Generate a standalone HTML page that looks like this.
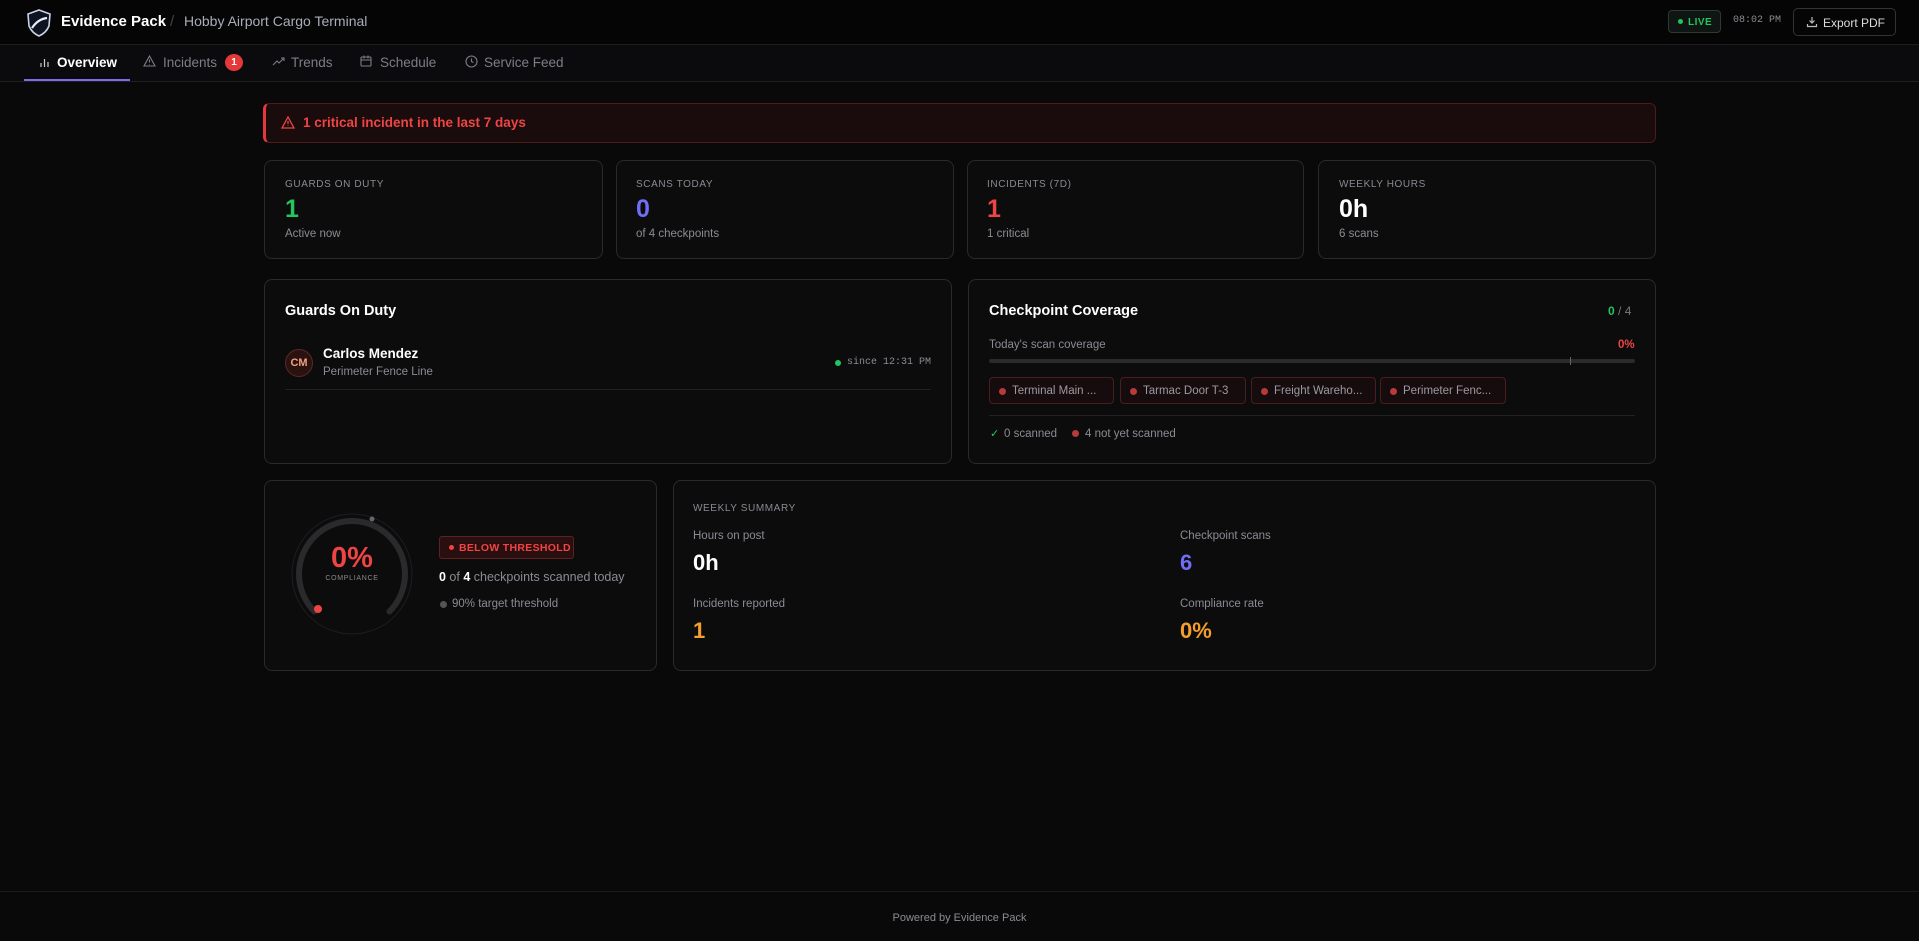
<!DOCTYPE html>
<html><head><meta charset="utf-8"><style>
*{box-sizing:border-box;margin:0;padding:0}
body{width:1919px;height:941px;background:#09090a;font-family:"Liberation Sans",sans-serif;color:#e5e5e5;position:relative;overflow:hidden}
.abs{position:absolute}
.card{position:absolute;background:#0c0c0d;border:1px solid #2a2a2d;border-radius:8px}
.lbl{font-size:10px;letter-spacing:.6px;color:#8a8a92;text-transform:uppercase}
.mono{font-family:"Liberation Mono",monospace}
.muted{color:#8b8b93}
</style></head><body>
<!-- header -->
<div class="abs" style="left:0;top:0;width:1919px;height:45px;background:#050505;border-bottom:1px solid #1e1e21"></div>
<svg class="abs" style="left:26px;top:9px" width="26" height="28" viewBox="0 0 26 28"><path d="M13 1 L24 5 L23 17 Q20 24 13 27 Q6 24 3 17 L2 5 Z" fill="#0d1320" stroke="#c9d3e6" stroke-width="1.6"/><path d="M6 19 Q12 10 21 9" fill="none" stroke="#e8eef8" stroke-width="2.2"/></svg>
<div class="abs" style="left:61px;top:13px;font-size:15px;font-weight:bold;color:#fff">Evidence Pack</div>
<div class="abs" style="left:170px;top:13px;font-size:15px;color:#444">/</div>
<div class="abs" style="left:184px;top:13px;font-size:14px;color:#a8adb8">Hobby Airport Cargo Terminal</div>
<div class="abs" style="left:1668px;top:10px;width:53px;height:23px;border:1px solid #2e3a30;background:#0f1512;border-radius:4px;font-size:10px;font-weight:bold;color:#22c55e;padding:6px 0 0 9px;letter-spacing:.5px"><span style="display:inline-block;width:5px;height:5px;border-radius:50%;background:#22c55e;margin-right:5px;vertical-align:1px"></span>LIVE</div>
<div class="abs mono" style="left:1733px;top:15px;font-size:10px;color:#8a8a92">08:02 PM</div>
<div class="abs" style="left:1793px;top:8px;width:103px;height:28px;border:1px solid #333;border-radius:5px;font-size:12px;color:#ddd;padding:7px 0 0 29px;background:#050505">Export PDF</div>
<svg class="abs" style="left:1806px;top:16px" width="12" height="12" viewBox="0 0 12 12" fill="none" stroke="#bbb" stroke-width="1.2"><path d="M6 1v6M3.5 4.5L6 7l2.5-2.5M1.5 8v2.5h9V8"/></svg>
<!-- nav -->
<div class="abs" style="left:0;top:45px;width:1919px;height:37px;background:#0b0b0d;border-bottom:1px solid #1f1f22"></div>
<svg class="abs" style="left:39px;top:57px" width="11" height="10" viewBox="0 0 11 10" stroke="#ccc" stroke-width="1.2"><path d="M2 10V6M5.5 10V2M9 10V5"/></svg>
<div class="abs" style="left:57px;top:55px;font-size:13.5px;font-weight:bold;color:#fff">Overview</div>
<div class="abs" style="left:24px;top:79px;width:106px;height:2px;background:#7c6cf0"></div>
<svg class="abs" style="left:143px;top:55px" width="13" height="12" viewBox="0 0 13 12" fill="none" stroke="#7d7d86" stroke-width="1.1"><path d="M6.5 1L12 11H1Z M6.5 4.5v3 M6.5 9v.5"/></svg>
<div class="abs" style="left:163px;top:55px;font-size:13.5px;color:#7d7d86">Incidents</div>
<div class="abs" style="left:225px;top:54px;width:18px;height:17px;border-radius:50%;background:#e5383b;color:#fff;font-size:10px;font-weight:bold;text-align:center;line-height:17px">1</div>
<svg class="abs" style="left:272px;top:57px" width="13" height="9" viewBox="0 0 13 9" fill="none" stroke="#7d7d86" stroke-width="1.1"><path d="M1 8L5 4l2 2 5-5M9 1h3v3"/></svg>
<div class="abs" style="left:291px;top:55px;font-size:13.5px;color:#7d7d86">Trends</div>
<svg class="abs" style="left:360px;top:55px" width="12" height="12" viewBox="0 0 12 12" fill="none" stroke="#7d7d86" stroke-width="1.1"><rect x="1" y="2" width="10" height="9" rx="1"/><path d="M1 5h10M4 0.5v3M8 .5v3"/></svg>
<div class="abs" style="left:380px;top:55px;font-size:13.5px;color:#7d7d86">Schedule</div>
<svg class="abs" style="left:465px;top:55px" width="13" height="13" viewBox="0 0 13 13" fill="none" stroke="#7d7d86" stroke-width="1.1"><circle cx="6.5" cy="6.5" r="5.5"/><path d="M6.5 3.5v3l2 1"/></svg>
<div class="abs" style="left:484px;top:55px;font-size:13.5px;color:#7d7d86">Service Feed</div>
<!-- alert -->
<div class="abs" style="left:263px;top:103px;width:1393px;height:40px;background:#1a0b0c;border:1px solid #4a1c1e;border-left:3px solid #e5383b;border-radius:6px"></div>
<svg class="abs" style="left:281px;top:116px" width="14" height="13" viewBox="0 0 14 13" fill="none" stroke="#ef4444" stroke-width="1.3"><path d="M7 1l6 11H1Z M7 5v3 M7 9.5v.5"/></svg>
<div class="abs" style="left:303px;top:115px;font-size:13.5px;font-weight:bold;color:#ef4444">1 critical incident in the last 7 days</div>
<!-- stat cards -->
<div class="card" style="left:264px;top:160px;width:339px;height:99px"></div>
<div class="card" style="left:616px;top:160px;width:338px;height:99px"></div>
<div class="card" style="left:967px;top:160px;width:337px;height:99px"></div>
<div class="card" style="left:1318px;top:160px;width:338px;height:99px"></div>
<div class="abs lbl" style="left:285px;top:179px">Guards on duty</div>
<div class="abs" style="left:285px;top:195px;font-size:25px;font-weight:bold;color:#22c55e">1</div>
<div class="abs muted" style="left:285px;top:228px;font-size:11.5px">Active now</div>
<div class="abs lbl" style="left:636px;top:179px">Scans today</div>
<div class="abs" style="left:636px;top:195px;font-size:25px;font-weight:bold;color:#6f6ef5">0</div>
<div class="abs muted" style="left:636px;top:228px;font-size:11.5px">of 4 checkpoints</div>
<div class="abs lbl" style="left:987px;top:179px">Incidents (7d)</div>
<div class="abs" style="left:987px;top:195px;font-size:25px;font-weight:bold;color:#ef4444">1</div>
<div class="abs muted" style="left:987px;top:228px;font-size:11.5px">1 critical</div>
<div class="abs lbl" style="left:1339px;top:179px">Weekly hours</div>
<div class="abs" style="left:1339px;top:195px;font-size:25px;font-weight:bold;color:#fff">0h</div>
<div class="abs muted" style="left:1339px;top:228px;font-size:11.5px">6 scans</div>
<!-- guards panel -->
<div class="card" style="left:264px;top:279px;width:688px;height:185px"></div>
<div class="abs" style="left:285px;top:303px;font-size:14.5px;font-weight:bold;color:#fff">Guards On Duty</div>
<div class="abs" style="left:285px;top:349px;width:28px;height:28px;border-radius:50%;background:#2a1210;border:1px solid #5a2a22;color:#f0a080;font-size:11px;font-weight:bold;text-align:center;line-height:26px">CM</div>
<div class="abs" style="left:323px;top:346px;font-size:13.5px;font-weight:bold;color:#fff">Carlos Mendez</div>
<div class="abs muted" style="left:323px;top:366px;font-size:11.5px">Perimeter Fence Line</div>
<div class="abs" style="left:835px;top:360px;width:6px;height:6px;border-radius:50%;background:#22c55e"></div>
<div class="abs mono muted" style="left:847px;top:357px;font-size:10px">since 12:31 PM</div>
<div class="abs" style="left:285px;top:389px;width:646px;height:1px;background:#222225"></div>
<!-- checkpoint panel -->
<div class="card" style="left:968px;top:279px;width:688px;height:185px"></div>
<div class="abs" style="left:989px;top:303px;font-size:14.5px;font-weight:bold;color:#fff">Checkpoint Coverage</div>
<div class="abs" style="left:1608px;top:304px;font-size:12px;color:#777"><b style="color:#22c55e">0</b> / 4</div>
<div class="abs muted" style="left:989px;top:339px;font-size:11.5px">Today's scan coverage</div>
<div class="abs" style="left:1618px;top:339px;font-size:11.5px;font-weight:bold;color:#ef4444">0%</div>
<div class="abs" style="left:989px;top:359px;width:646px;height:4px;border-radius:2px;background:#2b2b2e"></div>
<div class="abs" style="left:1570px;top:357px;width:1px;height:8px;background:#666"></div>
<div class="abs" style="left:989px;top:377px;width:125px;height:27px;border:1px solid #4a1e20;background:#170c0d;border-radius:4px;font-size:11.5px;color:#9a9aa2;padding:7px 0 0 22px">Terminal Main ...</div>
<div class="abs" style="left:1120px;top:377px;width:126px;height:27px;border:1px solid #4a1e20;background:#170c0d;border-radius:4px;font-size:11.5px;color:#9a9aa2;padding:7px 0 0 22px">Tarmac Door T-3</div>
<div class="abs" style="left:1251px;top:377px;width:125px;height:27px;border:1px solid #4a1e20;background:#170c0d;border-radius:4px;font-size:11.5px;color:#9a9aa2;padding:7px 0 0 22px">Freight Wareho...</div>
<div class="abs" style="left:1380px;top:377px;width:126px;height:27px;border:1px solid #4a1e20;background:#170c0d;border-radius:4px;font-size:11.5px;color:#9a9aa2;padding:7px 0 0 22px">Perimeter Fenc...</div>
<div class="abs" style="left:999px;top:388px;width:7px;height:7px;border-radius:50%;background:#b83a3a"></div>
<div class="abs" style="left:1130px;top:388px;width:7px;height:7px;border-radius:50%;background:#b83a3a"></div>
<div class="abs" style="left:1261px;top:388px;width:7px;height:7px;border-radius:50%;background:#b83a3a"></div>
<div class="abs" style="left:1390px;top:388px;width:7px;height:7px;border-radius:50%;background:#b83a3a"></div>
<div class="abs" style="left:989px;top:415px;width:646px;height:1px;background:#222225"></div>
<div class="abs" style="left:990px;top:427px;font-size:11px;color:#22c55e">✓</div>
<div class="abs muted" style="left:1004px;top:428px;font-size:11.5px">0 scanned</div>
<div class="abs" style="left:1072px;top:430px;width:7px;height:7px;border-radius:50%;background:#b83a3a"></div>
<div class="abs muted" style="left:1085px;top:428px;font-size:11.5px">4 not yet scanned</div>
<!-- compliance -->
<div class="card" style="left:264px;top:480px;width:393px;height:191px"></div>
<svg class="abs" style="left:290px;top:512px" width="124" height="124" viewBox="0 0 124 124">
<circle cx="62" cy="62" r="60" fill="none" stroke="#1e1e22" stroke-width="1"/>
<path d="M24.5 99.5 A53 53 0 1 1 99.5 99.5" fill="none" stroke="#2a2a2d" stroke-width="6" stroke-linecap="round"/>
<circle cx="28" cy="97" r="4" fill="#ef4444"/>
<circle cx="82" cy="7" r="2.5" fill="#666"/>
</svg>
<div class="abs" style="left:312px;top:542px;width:80px;text-align:center;font-size:29px;font-weight:bold;color:#ef4444">0%</div>
<div class="abs" style="left:312px;top:575px;width:80px;text-align:center;font-size:7px;letter-spacing:.7px;color:#8a8a92">COMPLIANCE</div>
<div class="abs" style="left:439px;top:536px;width:135px;height:23px;border:1px solid #5a2222;background:#2a0f10;border-radius:3px;font-size:10.5px;font-weight:bold;color:#ef4444;padding:5px 0 0 9px;letter-spacing:.3px"><span style="display:inline-block;width:5px;height:5px;border-radius:50%;background:#ef4444;margin-right:5px;vertical-align:1px"></span>BELOW THRESHOLD</div>
<div class="abs muted" style="left:439px;top:570px;font-size:12.5px"><b style="color:#fff">0</b> of <b style="color:#fff">4</b> checkpoints scanned today</div>
<div class="abs" style="left:440px;top:601px;width:7px;height:7px;border-radius:50%;background:#555"></div>
<div class="abs muted" style="left:452px;top:598px;font-size:11.5px">90% target threshold</div>
<!-- weekly -->
<div class="card" style="left:673px;top:480px;width:983px;height:191px"></div>
<div class="abs lbl" style="left:693px;top:503px">Weekly summary</div>
<div class="abs muted" style="left:693px;top:530px;font-size:11.5px">Hours on post</div>
<div class="abs" style="left:693px;top:550px;font-size:22px;font-weight:bold;color:#fff">0h</div>
<div class="abs muted" style="left:693px;top:598px;font-size:11.5px">Incidents reported</div>
<div class="abs" style="left:693px;top:618px;font-size:22px;font-weight:bold;color:#f59e2b">1</div>
<div class="abs muted" style="left:1180px;top:530px;font-size:11.5px">Checkpoint scans</div>
<div class="abs" style="left:1180px;top:550px;font-size:22px;font-weight:bold;color:#6f6ef5">6</div>
<div class="abs muted" style="left:1180px;top:598px;font-size:11.5px">Compliance rate</div>
<div class="abs" style="left:1180px;top:618px;font-size:22px;font-weight:bold;color:#f59e2b">0%</div>
<!-- footer -->
<div class="abs" style="left:0;top:891px;width:1919px;height:1px;background:#1c1c1f"></div>
<div class="abs muted" style="left:0;top:912px;width:1919px;text-align:center;font-size:11px">Powered by Evidence Pack</div>
</body></html>
